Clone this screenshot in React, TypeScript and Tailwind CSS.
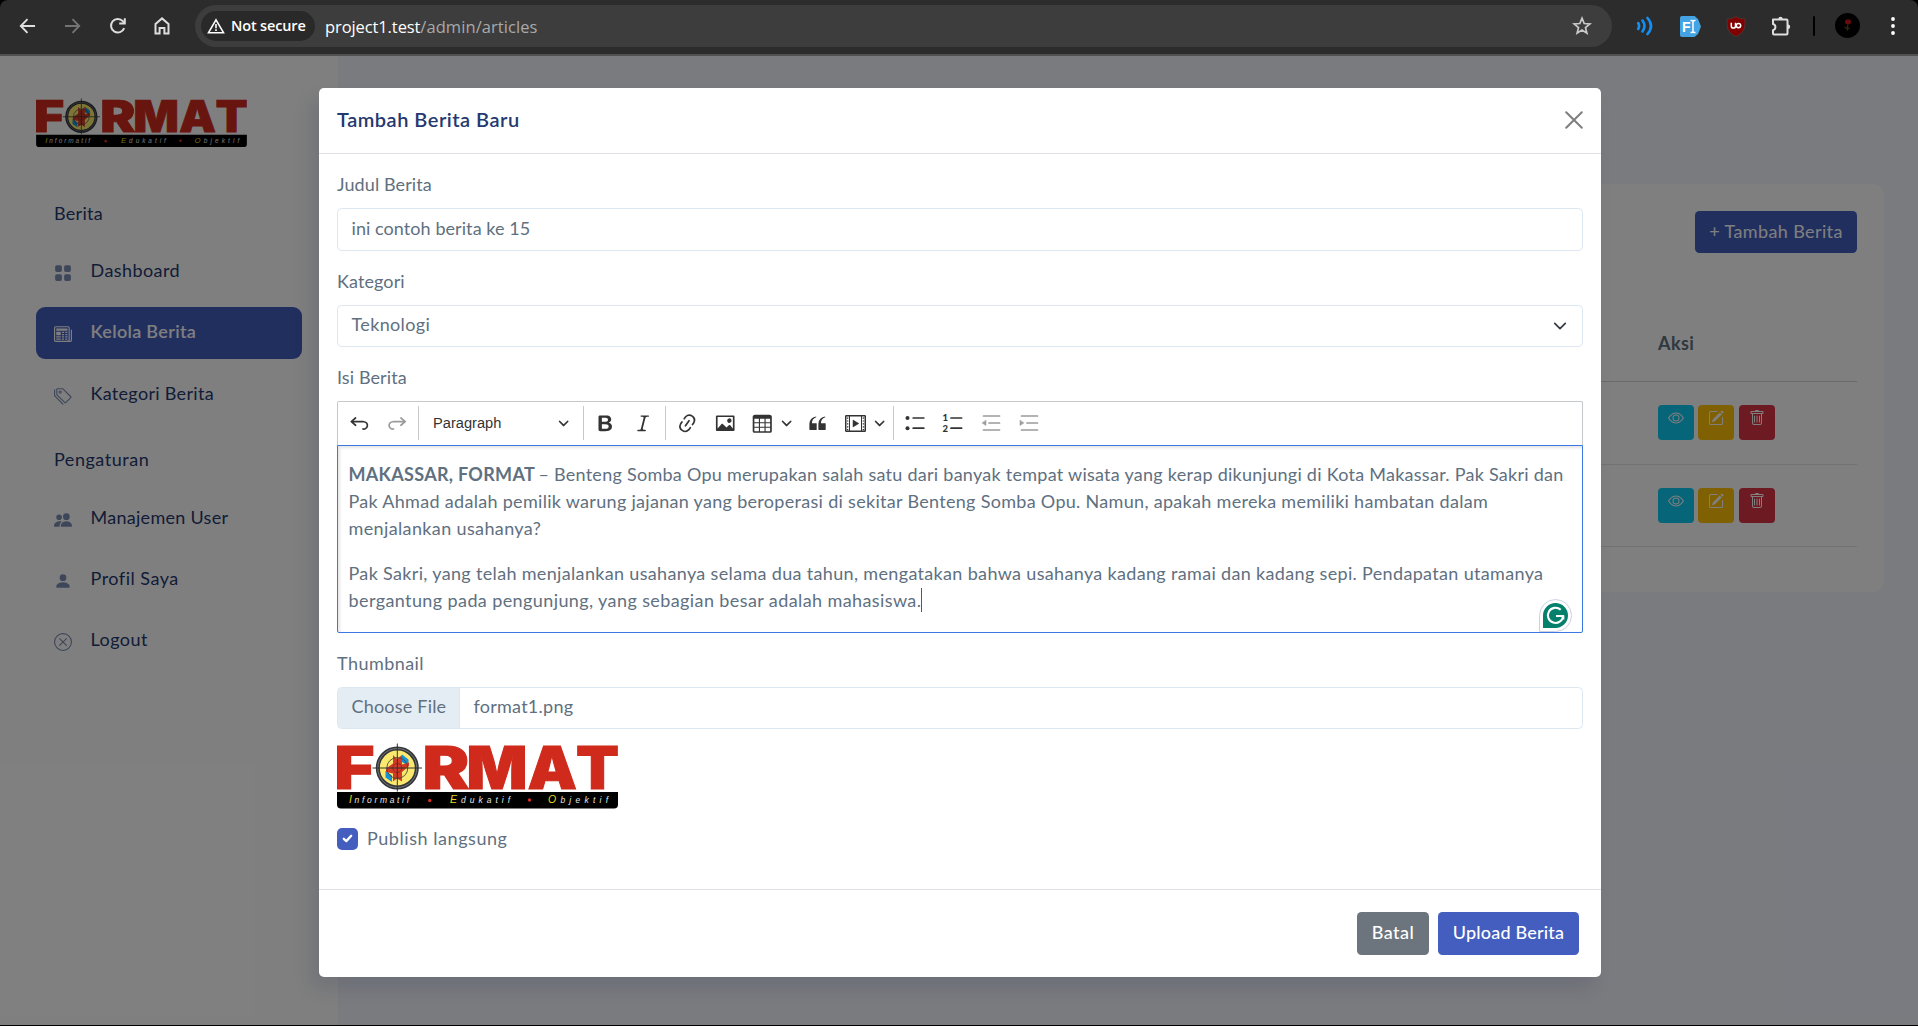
import type { ReactNode } from "react";
import {
  BsEye,
  BsGridFill,
  BsNewspaper,
  BsPencilSquare,
  BsPeopleFill,
  BsPersonFill,
  BsTags,
  BsTrash,
  BsXCircle,
} from "react-icons/bs";

/* ---------- Browser chrome ---------- */

function BrowserBar() {
  return (
    <div className="h-[56px] bg-black">
      <div className="flex h-full items-center rounded-t-[8px] border-b-2 border-[#515151] bg-[#2c2c2c] pb-[3px] text-[#dedede]">
        <svg className="ml-[18px] mt-px" width="20" height="20" viewBox="0 0 20 20" fill="none" stroke="currentColor" strokeWidth="1.9">
          <path d="M17 10H3M9.5 3.2L2.8 10l6.7 6.8" />
        </svg>
        <svg className="ml-[24px] mt-px text-[#747474]" width="20" height="20" viewBox="0 0 20 20" fill="none" stroke="currentColor" strokeWidth="1.9">
          <path d="M3 10h14M10.5 3.2l6.7 6.8-6.7 6.8" />
        </svg>
        <svg className="ml-[26px] mt-px" width="20" height="20" viewBox="0 0 20 20" fill="none" stroke="currentColor" strokeWidth="2">
          <path d="M16.2 12.2A6.8 6.8 0 1 1 14.9 5.2L16.6 7" />
          <path d="M16.8 2.2V7.6H11.2" />
        </svg>
        <svg className="ml-[24px] mt-px" width="20" height="20" viewBox="0 0 20 20" fill="none" stroke="currentColor" strokeWidth="2">
          <path d="M3.500 17.500V8L10 2.400 16.500 8v9.500h-4.100v-5.500H7.600v5.500z" />
        </svg>
        <div className="ml-[23px] flex h-[42px] w-[1417px] items-center rounded-full bg-[#3d3d3d] pl-[6px] pr-[20px]">
          <div className="flex h-[30px] w-[114px] items-center rounded-full bg-[#292929] pl-[6px]">
            <svg width="18" height="16" viewBox="0 0 18 16" fill="none" stroke="#fff" strokeWidth="1.600">
              <path d="M9 1.800L16.500 14.700h-15z" />
              <path d="M9 6v4.300M9 11.300v1.700" />
            </svg>
            <span className="ml-[6px] whitespace-nowrap font-['Open_Sans'] text-[14.5px] font-semibold tracking-[-0.150px] text-white">Not secure</span>
          </div>
          <span className="ml-[10px] mt-[2px] whitespace-nowrap font-['Open_Sans'] text-[16.500px] leading-[24px] text-white">
            <span className="tracking-[-0.1px]">project1.test</span>
            <span className="tracking-[0.07px] text-[#a9a9a9]">/admin/articles</span>
          </span>
          <svg className="ml-auto mt-px" width="20" height="20" viewBox="0 0 20 20" fill="none" stroke="#c9c9c9" strokeWidth="1.700">
            <path d="M10 2.200l2.200 5.300 5.700.4-4.400 3.700 1.400 5.600-4.900-3.100-4.900 3.100 1.400-5.600L2.100 7.900l5.700-.4z" />
          </svg>
        </div>
        <svg className="ml-[24px] mt-px" width="18" height="20" viewBox="0 0 18 20" fill="none" stroke="#1390f5" strokeWidth="2.600" strokeLinecap="round">
          <path d="M2.200 7q1.800 3 0 6M6.500 4.500q4 5.500 0 11M11.500 2q7 8 0 16" />
        </svg>
        <svg className="ml-[26px] mt-px" width="21" height="21" viewBox="0 0 21 21">
          <path d="M2 0h12.500L18 3l3 7.500-3 7.500-3.500 3H2a2 2 0 0 1-2-2V2a2 2 0 0 1 2-2z" fill="#43a3e3" />
          <text x="2" y="15.500" fontFamily="Liberation Sans" fontSize="14" fontWeight="700" fill="#fff">F</text>
          <path d="M10.500 4.500h1.500l1 1 1-1h1.500M13 5v11M10.500 16.500h1.500l1-1 1 1h1.500" stroke="#fff" strokeWidth="1.500" fill="none" />
        </svg>
        <svg className="ml-[25px] mt-px" width="20" height="21" viewBox="0 0 20 21">
          <path d="M10 .5c3 2 6 2.600 9 2.600 0 8 0 13.400-9 17.400C1 16.500 1 11.100 1 3.100c3 0 6-.6 9-2.600z" fill="#800000" stroke="#5e4040" strokeWidth=".6" />
          <path d="M5.300 6.800v3.200a2.100 2.100 0 0 0 4.200 0V6.800" stroke="#fff" strokeWidth="1.500" fill="none" />
          <circle cx="12.500" cy="9.600" r="2.200" stroke="#fff" strokeWidth="1.500" fill="none" />
        </svg>
        <svg className="ml-[24px]" width="22" height="22" viewBox="0 0 22 22">
          <path d="M3 4.500h13.500a1 1 0 0 1 1 1V18.500a1 1 0 0 1-1 1H4a1 1 0 0 1-1-1v-3.300a3.200 3.200 0 0 0 0-6.200z" fill="none" stroke="#dedede" strokeWidth="2" strokeLinejoin="round" />
          <path d="M8.300 4a2.200 2.200 0 0 1 4.400 0zM18 9.600a2.200 2.200 0 0 1 0 4.400z" fill="#dedede" />
        </svg>
        <div className="ml-[21px] h-[20px] w-[2px] rounded bg-black" />
        <svg className="ml-[20px]" width="25" height="25" viewBox="0 0 25 25">
          <circle cx="12.500" cy="12.500" r="12.500" fill="#000" />
          <ellipse cx="13" cy="8.800" rx="3" ry="2.600" fill="#6b0a0c" />
          <path d="M12.800 11.500l-.5 6M9.500 14l3 2 2-1" stroke="#33250f" strokeWidth="1.300" fill="none" />
        </svg>
        <svg className="ml-[30px]" width="6" height="20" viewBox="0 0 6 20" fill="#fff">
          <circle cx="3" cy="3" r="1.900" />
          <circle cx="3" cy="10" r="1.900" />
          <circle cx="3" cy="17" r="1.900" />
        </svg>
      </div>
    </div>
  );
}

/* ---------- Brand logo ---------- */

function Letter({ x, w, children }: { x: number; w: number; children: string }) {
  return (
    <text x={x} y="45.800" textLength={w} lengthAdjust="spacingAndGlyphs" fontFamily="Inter" fontWeight="900" fontSize="59" fill="#cf2a1c" stroke="#cf2a1c" strokeWidth="1">
      {children}
    </text>
  );
}

function Tag({ x, w, first, rest }: { x: number; w: number; first: string; rest: string }) {
  return (
    <text x={x} y="60.300" textLength={w} fontFamily="Liberation Sans" fontStyle="italic" fontSize="8.500" fill="#e6e6e6">
      <tspan fontSize="10.500" fill="#e3dc1e">{first}</tspan>
      {rest}
    </text>
  );
}

function Logo({ className }: { className: string }) {
  return (
    <svg className={className} viewBox="0 0 281 66">
      <Letter x={-3.500} w={41}>F</Letter>
      <Letter x={85.500} w={47}>R</Letter>
      <Letter x={129.500} w={61}>M</Letter>
      <Letter x={190.500} w={49.500}>A</Letter>
      <Letter x={239} w={43}>T</Letter>
      <circle cx="60.300" cy="25" r="19.500" fill="#fbe96f" stroke="#34363a" strokeWidth="4" />
      <circle cx="60.300" cy="25" r="19.500" fill="none" stroke="#8d8f92" strokeWidth=".7" />
      <path d="M65 11.500l6.500 5v6.500l-6.500-4zM48.500 28l6.500 4.500v6.500l-6.500-4.500z" fill="#1890d6" />
      <path d="M56 12l4 4 5-4v9.500l7-2v3.500l-7 6v9.500l-5-3-4 3v-8l-7-1.500v-3.500l7-5z" fill="#d63a26" />
      <circle cx="60.300" cy="25" r="10.500" fill="none" stroke="#4a4a3a" strokeWidth=".9" />
      <circle cx="60.300" cy="25" r="4.500" fill="none" stroke="#8a2a20" strokeWidth=".9" />
      <path d="M60.300 .5v48M35.500 25h49.500" stroke="#333" strokeWidth="1" />
      <path d="M0 49h281V61.500a4 4 0 0 1-4 4H4a4 4 0 0 1-4-4z" fill="#000" />
      <Tag x={12} w={60} first="I" rest="nformatif" />
      <Tag x={113} w={60} first="E" rest="dukatif" />
      <Tag x={211} w={60} first="O" rest="bjektif" />
      <circle cx="92.800" cy="57.500" r="1.700" fill="#d63024" />
      <circle cx="192.500" cy="57" r="1.700" fill="#d63024" />
    </svg>
  );
}

/* ---------- Dashboard behind the dialog ---------- */

function MenuItem({ icon, label, active }: { icon: ReactNode; label: ReactNode; active?: boolean }) {
  return (
    <div className={active ? "flex h-[52px] items-center rounded-[9px] bg-[#435ebe] pl-[18px] text-white" : "flex h-[52px] items-center pl-[18px] text-[#25396f]"}>
      <span className={active ? "mt-px flex text-[18px] text-white" : "mt-px flex text-[18px] text-[#7c8db5]"}>{icon}</span>
      <span className="-mt-[4px] ml-[18.500px] whitespace-nowrap leading-[27px]">{label}</span>
    </div>
  );
}

function Sidebar() {
  return (
    <aside className="w-[338px] shrink-0 bg-white px-[36px] pt-[41.500px] text-[#25396f]">
      <Logo className="block h-[49.500px] w-[211px]" />
      <p className="mt-[52.500px] pl-[18px] leading-[27px] tracking-[0.3px]">Berita</p>
      <nav className="mt-[19.500px] flex flex-col gap-[9px]">
        <MenuItem icon={<BsGridFill />} label={<span className="tracking-[0.43px]">Dashboard</span>} />
        <MenuItem active icon={<BsNewspaper />} label={<span className="font-semibold tracking-[0.33px]">Kelola Berita</span>} />
        <div className="pt-px">
          <MenuItem icon={<BsTags />} label={<span className="tracking-[0.31px]">Kategori Berita</span>} />
        </div>
      </nav>
      <p className="mt-[24.500px] pl-[18px] leading-[27px] tracking-[0.53px]">Pengaturan</p>
      <nav className="mt-[21px] flex flex-col gap-[9px]">
        <MenuItem icon={<BsPeopleFill />} label={<span className="tracking-[0.28px]">Manajemen User</span>} />
        <MenuItem icon={<BsPersonFill />} label={<span className="tracking-[0.5px]">Profil Saya</span>} />
        <MenuItem icon={<BsXCircle />} label={<span className="tracking-[0.45px]">Logout</span>} />
      </nav>
    </aside>
  );
}

function ActionRow() {
  return (
    <div className="flex h-[82.500px] items-start border-b border-[#e4e4e4] pl-[1257px] pt-[23px] text-[16px] text-white">
      <span className="flex h-[35px] w-[36px] justify-center rounded-[4px] bg-[#0dcaf0] pt-[5px]"><BsEye /></span>
      <span className="ml-[4px] flex h-[35px] w-[36px] justify-center rounded-[4px] bg-[#ffc107] pt-[5px]"><BsPencilSquare /></span>
      <span className="ml-[5px] flex h-[35px] w-[36px] justify-center rounded-[4px] bg-[#dc3545] pt-[5px]"><BsTrash /></span>
    </div>
  );
}

function Dashboard() {
  return (
    <div className="flex h-full">
      <Sidebar />
      <main className="flex-1 bg-[#f4f6ff] pl-[36px] pr-[34px] pt-[128px]">
        <section className="h-[408px] rounded-[12px] bg-white pl-[27px] pr-[27px] pt-[27px]">
          <div className="flex justify-end">
            <button className="flex h-[42px] w-[162px] items-center justify-center whitespace-nowrap rounded-[4.500px] bg-[#435ebe] pb-[2px] tracking-[0.38px] text-white">+ Tambah Berita</button>
          </div>
          <div className="mt-[77px] flex h-[52px] border-b border-[#d4d6d8] pl-[1257px]">
            <span className="font-bold leading-[27px] tracking-[0.4px] text-[#607080]">Aksi</span>
          </div>
          <ActionRow />
          <ActionRow />
        </section>
      </main>
    </div>
  );
}

/* ---------- Editor toolbar ---------- */

function Glyph({ d }: { d: string }) {
  return (
    <svg className="h-[22.500px] w-[22.500px] shrink-0" viewBox="0 0 20 20" fill="currentColor">
      <path d={d} />
    </svg>
  );
}

function Chevron() {
  return (
    <svg className="h-[11.250px] w-[11.250px] shrink-0" viewBox="0 0 10 10" fill="currentColor">
      <path d="M.941 4.523a.75.75 0 1 1 1.060-1.060l3.006 3.005 3.005-3.005a.75.75 0 1 1 1.060 1.060l-3.549 3.550a.75.75 0 0 1-1.168-.136L.941 4.523z" />
    </svg>
  );
}

const CELL = "flex shrink-0 items-center justify-center";
const SEP = "h-[34px] w-px shrink-0 bg-[#c9c9c9]";

const UNDO = "m5.042 9.367 2.189 1.837a.75.75 0 0 1-.965 1.149l-3.788-3.180a.747.747 0 0 1-.210-.284.750.750 0 0 1 .170-.945L6.230 4.762a.75.75 0 1 1 .964 1.150L4.863 7.866h8.917A.75.75 0 0 1 14 7.900a4 4 0 1 1-1.477 7.718l.344-1.489a2.500 2.500 0 1 0 1.094-4.730l.008-.032H5.042z";
const REDO = "m14.958 9.367-2.189 1.837a.75.75 0 0 0 .965 1.149l3.788-3.180a.747.747 0 0 0 .210-.284.750.750 0 0 0-.170-.945L13.770 4.762a.75.75 0 1 0-.964 1.150l2.331 1.955H6.220A.75.75 0 0 0 6 7.900a4 4 0 1 0 1.477 7.718l-.344-1.489A2.500 2.500 0 1 1 6.039 9.400l-.008-.032h8.927z";
const BOLD = "M10.187 17H5.773c-.637 0-1.092-.138-1.364-.415-.273-.277-.409-.718-.409-1.323V4.738c0-.617.140-1.062.419-1.332.279-.270.730-.406 1.354-.406h4.680c.690 0 1.288.041 1.793.124.506.083.960.242 1.360.478.341.197.644.447.906.750a3.262 3.262 0 0 1 .808 2.162c0 1.401-.722 2.426-2.167 3.075C15.050 10.175 16 11.315 16 13.010a3.756 3.756 0 0 1-2.296 3.504 6.100 6.100 0 0 1-1.517.377c-.571.073-1.238.110-2 .110zm-.217-6.217H7v4.087h3.069c1.977 0 2.965-.690 2.965-2.072 0-.707-.256-1.220-.768-1.537-.512-.319-1.277-.478-2.296-.478zM7 5.130v3.619h2.606c.729 0 1.292-.067 1.690-.200a1.600 1.600 0 0 0 .910-.765c.165-.267.247-.566.247-.897 0-.707-.260-1.176-.778-1.409-.519-.232-1.310-.348-2.375-.348H7z";
const ITALIC = "m9.586 14.633.021.004c-.036.335.095.655.393.962.082.083.173.150.274.201h1.474a.6.6 0 1 1 0 1.200H5.304a.6.6 0 0 1 0-1.200h1.150c.474-.070.809-.182 1.005-.334.157-.122.291-.320.404-.597l2.416-9.550a1.053 1.053 0 0 0-.281-.823 1.120 1.120 0 0 0-.442-.296H8.150a.6.6 0 0 1 0-1.200h6.443a.6.6 0 1 1 0 1.200h-1.195c-.376.056-.650.155-.823.296-.215.175-.423.439-.623.790l-2.366 9.347z";
const LINK = "m11.077 15 .991-1.416a.75.75 0 1 1 1.229.860l-1.148 1.640a.748.748 0 0 1-.217.206 5.251 5.251 0 0 1-8.503-5.955.741.741 0 0 1 .120-.274l1.147-1.639a.75.75 0 1 1 1.228.860L4.933 10.700l.006.003a3.750 3.750 0 0 0 6.132 4.294l.006.004zm5.494-5.335a.748.748 0 0 1-.120.274l-1.147 1.639a.75.75 0 1 1-1.228-.860l.860-1.230a3.750 3.750 0 0 0-6.144-4.301l-.860 1.229a.75.75 0 0 1-1.229-.860l1.148-1.640a.748.748 0 0 1 .217-.206 5.251 5.251 0 0 1 8.503 5.955zm-4.563-2.532a.75.75 0 0 1 .184 1.045l-3.155 4.505a.75.75 0 1 1-1.229-.860l3.155-4.506a.75.75 0 0 1 1.045-.184z";
const IMAGE = "M6.910 10.540c.260-.230.640-.210.880.030l3.360 3.140 2.230-2.060a.64.64 0 0 1 .870 0l2.520 2.970V4.500H3.200v10.120l3.710-4.080zm10.270-7.510c.600 0 1.090.470 1.090 1.050v11.840c0 .590-.490 1.060-1.090 1.060H2.790c-.600 0-1.090-.470-1.090-1.060V4.080c0-.580.490-1.050 1.100-1.050h14.380zm-5.220 5.560a1.960 1.960 0 1 1 3.400-1.960 1.960 1.960 0 0 1-3.400 1.960z";
const TABLE = "M3 6v3h4V6H3zm0 4v3h4v-3H3zm0 4v3h4v-3H3zm5 3h4v-3H8v3zm5 0h4v-3h-4v3zm4-4v-3h-4v3h4zm0-4V6h-4v3h4zm1.500 8a1.500 1.500 0 0 1-1.500 1.500H3A1.500 1.500 0 0 1 1.500 17V4c.222-.863 1.068-1.500 2-1.500h13c.932 0 1.778.637 2 1.500v13zM12 13v-3H8v3h4zm0-4V6H8v3h4z";
const QUOTE = "M3 10.423a6.500 6.500 0 0 1 6.056-6.408l.038.670C6.448 5.423 5.354 7.663 5.220 10H9c.552 0 .500.432.500.986v4.511c0 .554-.448.503-1 .503h-5c-.552 0-.500-.449-.500-1.003v-4.574zm8 0a6.500 6.500 0 0 1 6.056-6.408l.038.670c-2.646.739-3.740 2.979-3.873 5.315H17c.552 0 .500.432.500.986v4.511c0 .554-.448.503-1 .503h-5c-.552 0-.500-.449-.500-1.003v-4.574z";

function Toolbar() {
  return (
    <div className="flex h-[44px] items-center rounded-t-[2px] border border-b-0 border-[#c6c9cc] pb-px pl-[2px] text-[#333]">
      <span className={`${CELL} w-[39px]`}><Glyph d={UNDO} /></span>
      <span className={`${CELL} w-[36px] text-[#9b9b9b]`}><Glyph d={REDO} /></span>
      <span className={`${SEP} ml-[3px]`} />
      <span className="ml-[14px] w-[120px] shrink-0 font-['Liberation_Sans'] text-[14.630px] leading-[24px] text-[#333]">Paragraph</span>
      <span className={`${CELL} w-[21px]`}><Chevron /></span>
      <span className={`${SEP} ml-[9px]`} />
      <span className={`${CELL} w-[42px]`}><Glyph d={BOLD} /></span>
      <span className={`${CELL} w-[33px] pl-[2px]`}><Glyph d={ITALIC} /></span>
      <span className={`${SEP} ml-[6px]`} />
      <span className={`${CELL} w-[42px]`}><Glyph d={LINK} /></span>
      <span className={`${CELL} w-[34px]`}><Glyph d={IMAGE} /></span>
      <span className={`${CELL} w-[41px]`}><Glyph d={TABLE} /></span>
      <span className={`${CELL} w-[8px]`}><Chevron /></span>
      <span className={`${CELL} w-[53px]`}><Glyph d={QUOTE} /></span>
      <span className={`${CELL} w-[22px]`}>
        <svg className="h-[17px] w-[21px] shrink-0" viewBox="0 0 21 17" fill="none" stroke="currentColor">
          <rect x=".7" y=".8" width="19.600" height="15.400" rx=".6" strokeWidth="1.500" />
          <path d="M4.500 1v15M16.500 1v15" strokeWidth="1" />
          <path d="M2.600 2.500v13M18.400 2.500v13" strokeWidth="1.500" strokeDasharray="1.200 1.700" />
          <path d="M8 5v7l5.800-3.500z" fill="currentColor" strokeWidth=".5" />
        </svg>
      </span>
      <span className={`${CELL} w-[27px]`}><Chevron /></span>
      <span className={SEP} />
      <span className={`${CELL} w-[41px]`}>
        <svg className="h-[20px] w-[20px] shrink-0" viewBox="0 0 20 20" fill="currentColor">
          <circle cx="2.500" cy="5" r="2" />
          <circle cx="2.500" cy="15.200" r="2" />
          <path d="M8.200 5h10.600M8.200 15.200h10.600" stroke="currentColor" strokeWidth="1.700" strokeLinecap="round" />
        </svg>
      </span>
      <span className={`${CELL} w-[34px]`}>
        <svg className="h-[22px] w-[21px] shrink-0" viewBox="0 0 21 22" fill="currentColor">
          <text x=".5" y="9.300" fontFamily="Lato" fontSize="9.500" fontWeight="900">1</text>
          <text x=".5" y="20" fontFamily="Lato" fontSize="9.500" fontWeight="900">2</text>
          <path d="M9 6h10.600M9 16.200h10.600" stroke="currentColor" strokeWidth="1.700" strokeLinecap="round" />
        </svg>
      </span>
      <span className={`${CELL} w-[43px] text-[#9b9b9b]`}>
        <svg className="h-[20px] w-[20px] shrink-0" viewBox="0 0 20 20" stroke="currentColor" strokeWidth="1.700" strokeLinecap="round">
          <path d="M2.500 3h16M8 10h10.500M2.500 17h16" />
          <path d="M5 7.500v5L1.200 10z" fill="currentColor" strokeWidth=".5" />
        </svg>
      </span>
      <span className={`${CELL} w-[34px] text-[#9b9b9b]`}>
        <svg className="h-[20px] w-[20px] shrink-0" viewBox="0 0 20 20" stroke="currentColor" strokeWidth="1.700" strokeLinecap="round">
          <path d="M2.500 3h16M8 10h10.500M2.500 17h16" />
          <path d="M1 7.500v5L4.800 10z" fill="currentColor" strokeWidth=".5" />
        </svg>
      </span>
    </div>
  );
}

function EditorBody() {
  return (
    <div className="relative h-[188px] whitespace-nowrap rounded-b-[2px] border border-[#3a78e4] pl-[10.500px] pt-[15px] leading-[27px] shadow-[inset_2px_2px_3px_rgba(0,0,0,0.1)]">
      <p>
        <strong className="font-bold tracking-[0.3px]">MAKASSAR, FORMAT</strong>
        <span className="-ml-[1.500px] tracking-[0.265px]"> – Benteng Somba Opu merupakan salah satu dari banyak tempat wisata yang kerap dikunjungi di Kota Makassar. Pak Sakri dan</span>
        <br />
        <span className="tracking-[0.302px]">Pak Ahmad adalah pemilik warung jajanan yang beroperasi di sekitar Benteng Somba Opu. Namun, apakah mereka memiliki hambatan dalam</span>
        <br />
        <span className="tracking-[0.370px]">menjalankan usahanya?</span>
      </p>
      <p className="mt-[17.500px]">
        <span className="tracking-[0.334px]">Pak Sakri, yang telah menjalankan usahanya selama dua tahun, mengatakan bahwa usahanya kadang ramai dan kadang sepi. Pendapatan utamanya</span>
        <br />
        <span className="flex items-center">
          <span className="tracking-[0.400px]">bergantung pada pengunjung, yang sebagian besar adalah mahasiswa.</span>
          <span className="h-[24px] w-px bg-[#4b5b6b]" />
        </span>
      </p>
      <svg className="absolute bottom-0 right-[10px] h-[33px] w-[33px]" viewBox="0 0 33 33">
        <path d="M.5 32.500V16.500a16 16 0 1 1 16 16z" fill="#fff" stroke="#cdd0e0" />
        <path d="M4 29V16.500A12.500 12.500 0 1 1 16.500 29z" fill="#04806d" />
        <path d="M21.700 10.800a7.600 7.600 0 1 0 2.400 6.200M17 17h7.900M24.300 16.500v4" fill="none" stroke="#fff" strokeWidth="2.100" />
      </svg>
    </div>
  );
}

/* ---------- Dialog ---------- */

function Label({ children }: { children: ReactNode }) {
  return <label className="mb-[10.500px] block h-[27px] leading-[27px]">{children}</label>;
}

function ArticleDialog() {
  return (
    <div className="flex h-[889px] w-[1282px] flex-col rounded-[5px] bg-white text-[#607080] shadow-[-8px_12px_18px_0_rgba(25,42,70,0.13)]">
      <header className="flex h-[66px] shrink-0 items-center justify-between border-b border-[#dee2e6] pb-[2px] pl-[18px] pr-[18px]">
        <h5 className="text-[20px] font-semibold leading-[27px] tracking-[0.500px] text-[#25396f]">Tambah Berita Baru</h5>
        <svg width="18" height="18" viewBox="0 0 18 18" stroke="#7f7f7f" strokeWidth="2" strokeLinecap="round">
          <path d="M1.200 1.200l15.600 15.600M16.800 1.200L1.200 16.800" />
        </svg>
      </header>
      <div className="flex-1 px-[18px] pt-[16.500px]">
        <Label><span className="tracking-[0.1px]">Judul Berita</span></Label>
        <div className="flex h-[43px] items-center rounded-[4.500px] border border-[#dce7f1] px-[13.500px] pb-[2px]">
          <span className="tracking-[0.07px]">ini contoh berita ke 15</span>
        </div>
        <div className="h-[16.500px]" />
        <Label><span className="tracking-[0.1px]">Kategori</span></Label>
        <div className="flex h-[42px] items-center justify-between rounded-[4.500px] border border-[#dce7f1] pl-[13.500px] pr-[15px]">
          <span className="-mt-[3px] tracking-[0.350px]">Teknologi</span>
          <svg width="14" height="14" viewBox="0 0 16 16" fill="none" stroke="#343a40" strokeWidth="2" strokeLinecap="round" strokeLinejoin="round">
            <path d="m2 5 6 6 6-6" />
          </svg>
        </div>
        <div className="h-[16.500px]" />
        <Label><span className="tracking-[0.1px]">Isi Berita</span></Label>
        <Toolbar />
        <EditorBody />
        <div className="h-[17px]" />
        <label className="mb-[9.500px] block h-[27px] leading-[27px] tracking-[0.450px]">Thumbnail</label>
        <div className="flex h-[42px] overflow-hidden rounded-[4.500px] border border-[#dce7f1] leading-[27px]">
          <span className="w-[122px] border-r border-[#dce7f1] bg-[#e4edf4] pl-[13.500px] pt-[5px] tracking-[0.2px]">Choose File</span>
          <span className="pl-[13.500px] pt-[5px] tracking-[0.25px]">format1.png</span>
        </div>
        <Logo className="mt-[14px] block h-[66px] w-[281px]" />
        <div className="mt-[19px] flex">
          <span className="flex h-[22px] w-[21px] items-center justify-center rounded-[5px] bg-[#435ebe]">
            <svg width="11" height="9" viewBox="0 0 11 9" fill="none" stroke="#fff" strokeWidth="2.300" strokeLinecap="round" strokeLinejoin="round">
              <path d="M1.800 4.800l2.500 2.300L9.200 1.800" />
            </svg>
          </span>
          <span className="-mt-[3px] ml-[9px] leading-[27px] tracking-[0.55px]">Publish langsung</span>
        </div>
      </div>
      <footer className="flex h-[88px] shrink-0 justify-end gap-[9px] border-t border-[#dee2e6] pr-[22px] pt-[22px] text-white">
        <button className="h-[43px] w-[72px] rounded-[4.500px] bg-[#6c757d] pb-[3px] font-medium tracking-[0.5px]">Batal</button>
        <button className="h-[43px] w-[141px] whitespace-nowrap rounded-[4.500px] bg-[#435ebe] pb-[3px] font-medium tracking-[0.2px]">Upload Berita</button>
      </footer>
    </div>
  );
}

export default function App() {
  return (
    <div className="flex h-[1026px] w-[1918px] flex-col overflow-hidden bg-black font-[Lato,sans-serif] text-[18px]">
      <BrowserBar />
      <div className="relative h-[969px] overflow-hidden">
        <Dashboard />
        <div className="absolute inset-0 flex items-start bg-black/50 pl-[319px] pt-[32px]">
          <ArticleDialog />
        </div>
      </div>
    </div>
  );
}
